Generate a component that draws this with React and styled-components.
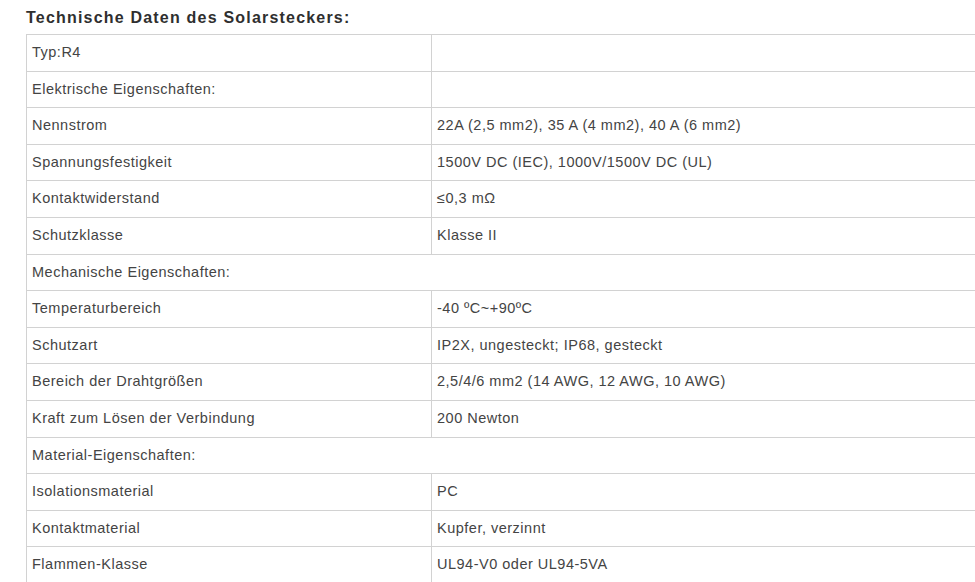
import React from 'react';
import styled, { createGlobalStyle } from 'styled-components';

const GlobalStyle = createGlobalStyle`
  html, body {
    margin: 0;
    padding: 0;
    background: #ffffff;
    overflow: hidden;
  }
`;

const Page = styled.div`
  font-family: "Liberation Sans", Arial, sans-serif;
  padding: 8px 0 0 26px;
  width: 949px;
  overflow: hidden;
`;

const Title = styled.h3`
  margin: 0 0 6px 0;
  font-size: 16px;
  line-height: 20px;
  font-weight: bold;
  letter-spacing: 1.2px;
  color: #2f2f2f;
`;

const Table = styled.table`
  border-collapse: collapse;
  width: 1000px;
  font-size: 14.5px;
  letter-spacing: 0.5px;
  color: #444444;
`;

const Cell = styled.td`
  border: 1px solid #d2d2d2;
  padding: 8px 5px;
  line-height: 19.6px;
  vertical-align: middle;
  width: ${p => (p.$first ? '394px' : 'auto')};
  white-space: nowrap;
`;

const rows = [
  ['Typ:R4', ''],
  ['Elektrische Eigenschaften:', ''],
  ['Nennstrom', '22A (2,5 mm2), 35 A (4 mm2), 40 A (6 mm2)'],
  ['Spannungsfestigkeit', '1500V DC (IEC), 1000V/1500V DC (UL)'],
  ['Kontaktwiderstand', '≤0,3 mΩ'],
  ['Schutzklasse', 'Klasse II'],
  ['Mechanische Eigenschaften:'],
  ['Temperaturbereich', '-40 ºC~+90ºC'],
  ['Schutzart', 'IP2X, ungesteckt; IP68, gesteckt'],
  ['Bereich der Drahtgrößen', '2,5/4/6 mm2 (14 AWG, 12 AWG, 10 AWG)'],
  ['Kraft zum Lösen der Verbindung', '200 Newton'],
  ['Material-Eigenschaften:'],
  ['Isolationsmaterial', 'PC'],
  ['Kontaktmaterial', 'Kupfer, verzinnt'],
  ['Flammen-Klasse', 'UL94-V0 oder UL94-5VA'],
];

function App() {
  return (
    <Page>
      <GlobalStyle />
      <Title>Technische Daten des Solarsteckers:</Title>
      <Table>
        <tbody>
          {rows.map((row, i) =>
            row.length === 1 ? (
              <tr key={i}>
                <Cell colSpan={2}>{row[0]}</Cell>
              </tr>
            ) : (
              <tr key={i}>
                <Cell $first>{row[0]}</Cell>
                <Cell>{row[1]}</Cell>
              </tr>
            )
          )}
        </tbody>
      </Table>
    </Page>
  );
}

export default App;
